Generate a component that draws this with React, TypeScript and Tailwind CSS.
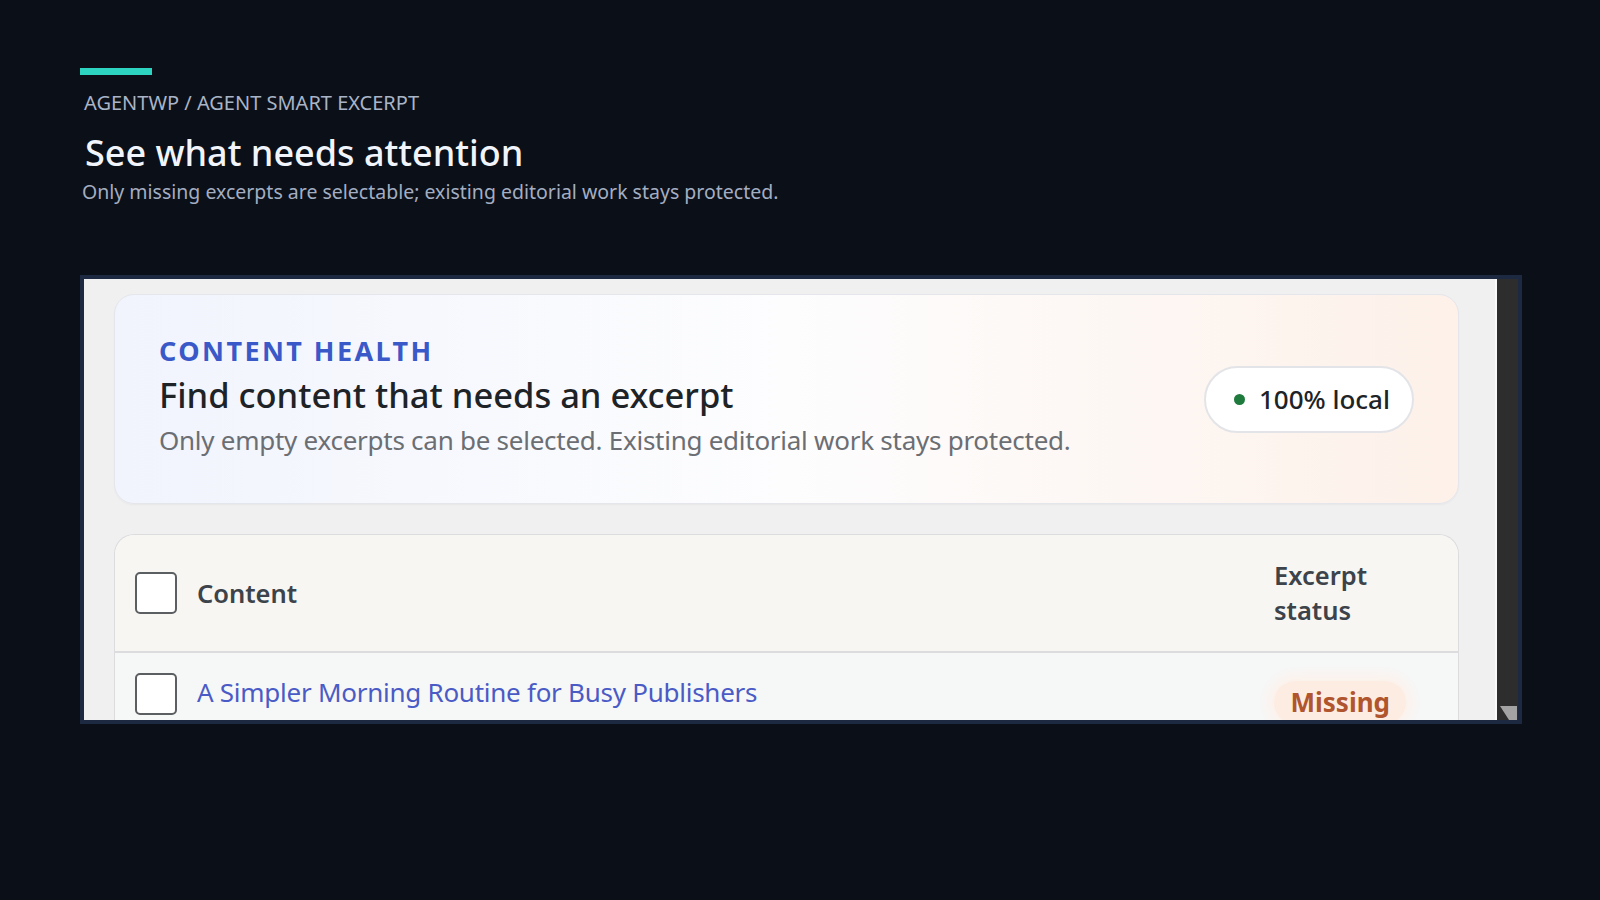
import React from "react";

/**
 * Checkbox drawn like the WP admin one, scaled up
 */
const BigCheckbox: React.FC = () => (
    <span className="block h-[42px] w-[42px] shrink-0 rounded-[5px] border-2 border-[#5c5f62] bg-white" />
);

/**
 * The screenshot of the plugin screen
 */
const PluginShot: React.FC = () => {
    return (
        <div className="mt-[70px] flex h-[449px] w-[1442px] overflow-hidden border-4 border-[#1c2940] bg-[#f0f0f1]">
            {/* Page area */}
            <div className="flex-1 overflow-hidden border-r-2 border-[#fafafa] pl-[30px] pr-[36px] pt-[15px]">

                {/* Content health card */}
                <div className="flex h-[210px] items-center justify-between rounded-[20px] border border-[#e4e6ec] bg-gradient-to-r from-[#f1f4fd] via-[#fdfdfe] to-[#fdf1e9] pl-[44px] pr-[44px] shadow-[0_1px_2px_rgba(0,0,0,0.04)]">
                    <div className="-mt-[6px] flex flex-col">
                        <p className="text-[27px] font-bold uppercase leading-[34px] tracking-[0.09em] text-[#3a59c9]">Content health</p>
                        <h2 className="mt-[5px] text-[34.5px] font-medium leading-[44px] text-[#1d2327]">Find content that needs an excerpt</h2>
                        <p className="mt-[5px] text-[26px] leading-[36px] tracking-[-0.01em] text-[#6b6e73]">Only empty excerpts can be selected. Existing editorial work stays protected.</p>
                    </div>
                    <div className="flex h-[67px] items-center gap-[14px] rounded-full border-2 border-[#e3e4e7] bg-white pl-[28px] pr-[22px]">
                        <span className="h-[11px] w-[11px] rounded-full bg-[#1f7a3d]" />
                        <span className="text-[26px] font-medium text-[#1d2327]">100% local</span>
                    </div>
                </div>

                {/* Table */}
                <div className="mt-[30px] rounded-t-[20px] border border-b-0 border-[#dcdcde] bg-[#f6f7f7]">
                    <div className="flex h-[116px] items-center rounded-t-[20px] bg-[#f7f6f3] pl-[20px]">
                        <BigCheckbox />
                        <span className="ml-[20px] flex-1 text-[25.5px] font-semibold text-[#3c434a]">Content</span>
                        <span className="w-[184px] pr-[60px] text-[25.5px] font-semibold leading-[35px] text-[#3c434a]">Excerpt status</span>
                    </div>
                    <div className="h-[2px] bg-[#dcdcde]" />
                    <div className="flex items-start pl-[20px] pt-[20px]">
                        <BigCheckbox />
                        <a className="ml-[20px] flex-1 text-[26px] leading-[38px] tracking-[-0.01em] text-[#4a5bc6]">A Simpler Morning Routine for Busy Publishers</a>
                        <div className="mr-[52px] mt-[8px] rounded-full bg-[#fdece1] px-[16px] py-[2px] shadow-[0_0_12px_6px_#fdf1ea]">
                            <span className="text-[26px] font-bold text-[#b0552e]">Missing</span>
                        </div>
                    </div>
                </div>
            </div>

            {/* Scrollbar */}
            <div className="flex w-[21px] flex-col justify-end bg-[#2d2d2d]">
                <svg viewBox="0 0 21 16" className="h-[16px] w-[21px]">
                    <polygon points="3,2 20,2 20,16 12,16" fill="#a3a3a3" />
                </svg>
            </div>
        </div>
    );
};

export default function App() {
    return (
        <div className="min-h-screen w-full bg-[#0b0f18] pl-20 pt-[68px]" style={{fontFamily: '"Noto Sans", "Open Sans", sans-serif'}}>
            <div className="h-[7px] w-[72px] bg-[#2dd4bf]" />
            <p className="mt-[15px] pl-[4px] text-[20px] leading-[26px] text-[#a9b4c6] uppercase">AgentWP / Agent Smart Excerpt</p>
            <h1 className="mt-[15px] pl-[5px] text-[36px] font-medium leading-[44px] text-[#f1f5fb]">See what needs attention</h1>
            <p className="mt-[4px] pl-[2px] text-[19.5px] leading-[26px] text-[#a3aec2]">Only missing excerpts are selectable; existing editorial work stays protected.</p>

            <PluginShot />
        </div>
    );
}
